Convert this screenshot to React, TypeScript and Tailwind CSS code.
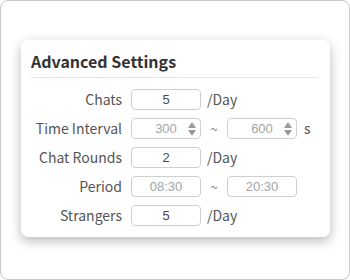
import React from 'react';

const Spin = () => (
    <svg width="8" height="14" viewBox="0 0 8 14" className="absolute right-[4px] top-1/2 -translate-y-1/2">
        <path d="M4 0.8 Q4.4 0.8 4.8 1.3 L7.6 5.2 Q7.9 6 7 6 L1 6 Q0.1 6 0.4 5.2 L3.2 1.3 Q3.6 0.8 4 0.8 Z" fill="#9a9a9a" />
        <path d="M4 13.2 Q4.4 13.2 4.8 12.7 L7.6 8.8 Q7.9 8 7 8 L1 8 Q0.1 8 0.4 8.8 L3.2 12.7 Q3.6 13.2 4 13.2 Z" fill="#9a9a9a" />
    </svg>
);

const Box = ({ value, muted, spin }: { value: string; muted?: boolean; spin?: boolean }) => (
    <div className="relative w-[70px] h-[21px] border border-[#cfcfcf] rounded-[4px] bg-white flex items-center justify-center">
        <span className={`text-[13px] leading-none font-['Liberation_Sans',Arial,sans-serif] ${muted ? 'text-[#a3a3a3]' : 'text-[#4a4a4a]'}`}>{value}</span>
        {spin && <Spin />}
    </div>
);

const Row = ({ label, children }: { label: string; children: React.ReactNode }) => (
    <div className="flex items-center h-[21px]">
        <div className="w-[91px] mr-[9px] text-right text-[14px] text-[#555]">{label}</div>
        {children}
    </div>
);

const Unit = ({ text }: { text: string }) => <span className="ml-[6px] text-[14px] text-[#555]">{text}</span>;
const Tilde = () => <span className="w-[26px] text-center text-[13px] text-[#888]">~</span>;

export default function App() {
    return (
        <div className="w-[350px] h-[280px] bg-white border border-[#c9c9c9] rounded-[8px] font-['Noto_Sans_CJK_SC','Noto_Sans',sans-serif] pt-[39px] pl-[20px]">
            <div className="w-[309px] h-[197px] bg-white rounded-[7px] shadow-[0_4px_12px_rgba(0,0,0,0.28)] pt-[10px] pl-[10px] pr-[12px]">
                <h3 className="text-[16px] leading-[23px] font-bold text-[#333]">Advanced Settings</h3>
                <div className="mt-[4px] h-px bg-[#e6e6e6]" />
                <div className="mt-[11px] flex flex-col gap-[8px]">
                    <Row label="Chats">
                        <Box value="5" />
                        <Unit text="/Day" />
                    </Row>
                    <Row label="Time Interval">
                        <Box value="300" muted spin />
                        <Tilde />
                        <Box value="600" muted spin />
                        <span className="ml-[7px] text-[14px] text-[#555]">s</span>
                    </Row>
                    <Row label="Chat Rounds">
                        <Box value="2" />
                        <Unit text="/Day" />
                    </Row>
                    <Row label="Period">
                        <Box value="08:30" muted />
                        <Tilde />
                        <Box value="20:30" muted />
                    </Row>
                    <Row label="Strangers">
                        <Box value="5" />
                        <Unit text="/Day" />
                    </Row>
                </div>
            </div>
        </div>
    );
}
